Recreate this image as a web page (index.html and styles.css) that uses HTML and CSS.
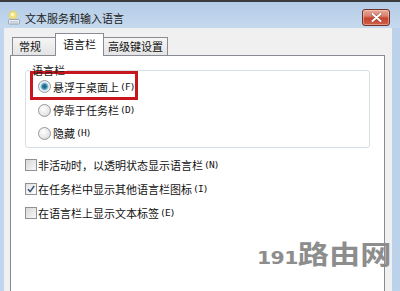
FILE: index.html
```html
<!DOCTYPE html>
<html lang="zh-CN">
<head>
<meta charset="utf-8">
<title>文本服务和输入语言</title>
<link rel="stylesheet" href="styles.css">
</head>
<body>
<div class="window">
  <div class="titlebar">
    <svg class="app-icon" width="14" height="15" viewBox="0 0 14 15">
      <circle cx="6" cy="5" r="4.5" fill="#f3d748" opacity="0.6"/>
      <circle cx="6" cy="5" r="3" fill="#f7e27a"/>
      <circle cx="5.5" cy="4.5" r="1.5" fill="#fffbe0"/>
      <rect x="1.5" y="9.5" width="11" height="4.5" rx="1" fill="#eef1f4" stroke="#8794a3" stroke-width="0.8"/>
      <path d="M3 11.5h8M3 12.8h8" stroke="#a9b3be" stroke-width="0.6"/>
    </svg>
    <span class="title">文本服务和输入语言</span>
    <div class="close">
      <svg width="11" height="9" viewBox="0 0 11 9">
        <path d="M1.5 1 L9.5 8 M9.5 1 L1.5 8" stroke="#7a2a20" stroke-width="3.2" stroke-linecap="round" opacity="0.5"/>
        <path d="M1.5 1 L9.5 8 M9.5 1 L1.5 8" stroke="#ffffff" stroke-width="2" stroke-linecap="round"/>
      </svg>
    </div>
  </div>
  <div class="client">
    <div class="tabs">
      <div class="tab tab-general">常规</div>
      <div class="tab tab-active">语言栏</div>
      <div class="tab tab-keys">高级键设置</div>
    </div>
    <div class="panel">
      <fieldset class="group">
        <legend>语言栏</legend>
        <div class="opt opt-hl"><span class="radio radio-on"></span>悬浮于桌面上<span class="key">(F)</span></div>
        <div class="opt"><span class="radio"></span>停靠于任务栏<span class="key">(D)</span></div>
        <div class="opt opt-last"><span class="radio"></span>隐藏<span class="key">(H)</span></div>
      </fieldset>
      <div class="checks">
        <div class="chk"><span class="box"></span>非活动时，以透明状态显示语言栏<span class="key">(N)</span></div>
        <div class="chk"><span class="box box-on"><svg width="10" height="10" viewBox="0 0 10 10"><path d="M2 5.2 L4.2 7.6 L8.2 2" fill="none" stroke="#3d5773" stroke-width="1.6"/></svg></span>在任务栏中显示其他语言栏图标<span class="key">(I)</span></div>
        <div class="chk"><span class="box"></span>在语言栏上显示文本标签<span class="key">(E)</span></div>
      </div>
    </div>
  </div>
</div>
<div class="watermark"><span class="wm-num">191</span>路由网</div>
</body>
</html>
```
FILE: styles.css
```css
html, body {
  margin: 0;
  padding: 0;
}
body {
  width: 400px;
  height: 291px;
  overflow: hidden;
  position: relative;
  font-family: "Noto Sans CJK SC", "Noto Sans", sans-serif;
  font-size: 11px;
  color: #111;
  background: #c3d7ec;
}
.window {
  height: 291px;
  box-sizing: border-box;
  display: flex;
  flex-direction: column;
  border-top: 2px solid #3a3a3a;
  background: linear-gradient(90deg, #c0d6ee 0, #c8dbef 50%, #bcd2ea 100%);
}
.titlebar {
  height: 26px;
  flex: none;
  display: flex;
  align-items: flex-start;
  padding-left: 7px;
  background: linear-gradient(#b3cce7, #c6d9ee);
}
.app-icon {
  margin-top: 8px;
  margin-right: 4px;
  flex: none;
}
.title {
  margin-top: 9px;
  line-height: 14px;
  font-size: 11px;
  color: #1b1b1b;
}
.close {
  margin-left: auto;
  margin-right: 10px;
  margin-top: 7px;
  width: 28px;
  height: 17px;
  box-sizing: border-box;
  border: 1px solid #6f3128;
  border-radius: 3px;
  background: linear-gradient(#e9aa9a 0%, #d9806e 40%, #c5442f 55%, #cf6149 100%);
  box-shadow: inset 0 0 0 1px rgba(255, 220, 210, 0.45);
  display: flex;
  align-items: center;
  justify-content: center;
}
.client {
  flex: 1;
  min-height: 0;
  margin: 0 8px 0 4px;
  padding: 5px 7px 0 6px;
  background: #f0f0f0;
  display: flex;
  flex-direction: column;
}
.tabs {
  height: 22px;
  flex: none;
  display: flex;
  align-items: flex-end;
  padding-left: 2px;
}
.tab {
  box-sizing: border-box;
  height: 18px;
  line-height: 16px;
  border: 1px solid #898c95;
  border-bottom: none;
  background: linear-gradient(#f5f5f5, #e4e4e4);
  white-space: nowrap;
  font-size: 11px;
}
.tab-general {
  width: 44px;
  padding-left: 6px;
}
.tab-active {
  width: 49px;
  height: 23px;
  margin-left: -1px;
  margin-bottom: -1px;
  padding-left: 7px;
  line-height: 20px;
  background: #fff;
  position: relative;
  z-index: 1;
}
.tab-keys {
  width: 65px;
  margin-left: -1px;
  padding-left: 4px;
}
.panel {
  flex: 1;
  background: #fff;
  border: 1px solid #898c95;
  border-bottom: none;
  padding: 0 14px;
}
.group {
  margin: 7px 0 0;
  padding: 0 4px 4px;
  border: 1px solid #d5dfe5;
  border-radius: 3px;
  min-width: 0;
}
.group legend {
  padding: 0 2px;
  line-height: 14px;
  font-size: 11px;
  color: #1a1a1a;
}
.opt {
  display: flex;
  align-items: center;
  height: 20px;
  padding-left: 8px;
  line-height: 14px;
  white-space: nowrap;
}
.opt-hl {
  box-sizing: border-box;
  width: 108px;
  height: 29px;
  margin-top: -6px;
  padding-left: 5px;
  padding-top: 2px;
  border: 3px solid #c8161e;
}
.opt-last {
  margin-top: 3px;
}
.key {
  font-family: "DejaVu Sans Mono", monospace;
  font-size: 9.5px;
  letter-spacing: -0.8px;
  margin-left: 1px;
}
.radio {
  flex: none;
  width: 13px;
  height: 13px;
  box-sizing: border-box;
  margin-right: 2px;
  border-radius: 50%;
  border: 1px solid #9399a0;
  background: radial-gradient(circle at 40% 35%, #ffffff 0, #e6e6e6 60%, #cfcfcf 100%);
}
.radio-on {
  background: radial-gradient(circle, #1d5878 0, #2d7aa0 2px, #8cc3dc 3.5px, #f3f3f3 4.5px, #dadada 100%);
}
.checks {
  padding-top: 7px;
  display: flex;
  flex-direction: column;
  gap: 4px;
}
.chk {
  display: flex;
  align-items: center;
  height: 20px;
  line-height: 14px;
  white-space: nowrap;
}
.box {
  flex: none;
  width: 12px;
  height: 12px;
  box-sizing: border-box;
  margin-right: 1px;
  border: 1px solid #8e9195;
  background: linear-gradient(135deg, #d8d8d8, #f7f7f7);
  display: flex;
  align-items: center;
  justify-content: center;
}
.box-on {
  background: linear-gradient(135deg, #e2e2e2, #ffffff);
}
.watermark {
  position: absolute;
  left: 257px;
  top: 238px;
  color: #8d8d8d;
  font-weight: 700;
  font-size: 26px;
  line-height: 30px;
  white-space: nowrap;
  transform: scaleX(1.2);
  transform-origin: left center;
}
.wm-num {
  font-family: "DejaVu Sans", sans-serif;
  font-size: 17px;
  font-weight: 700;
  letter-spacing: -0.5px;
}
```
